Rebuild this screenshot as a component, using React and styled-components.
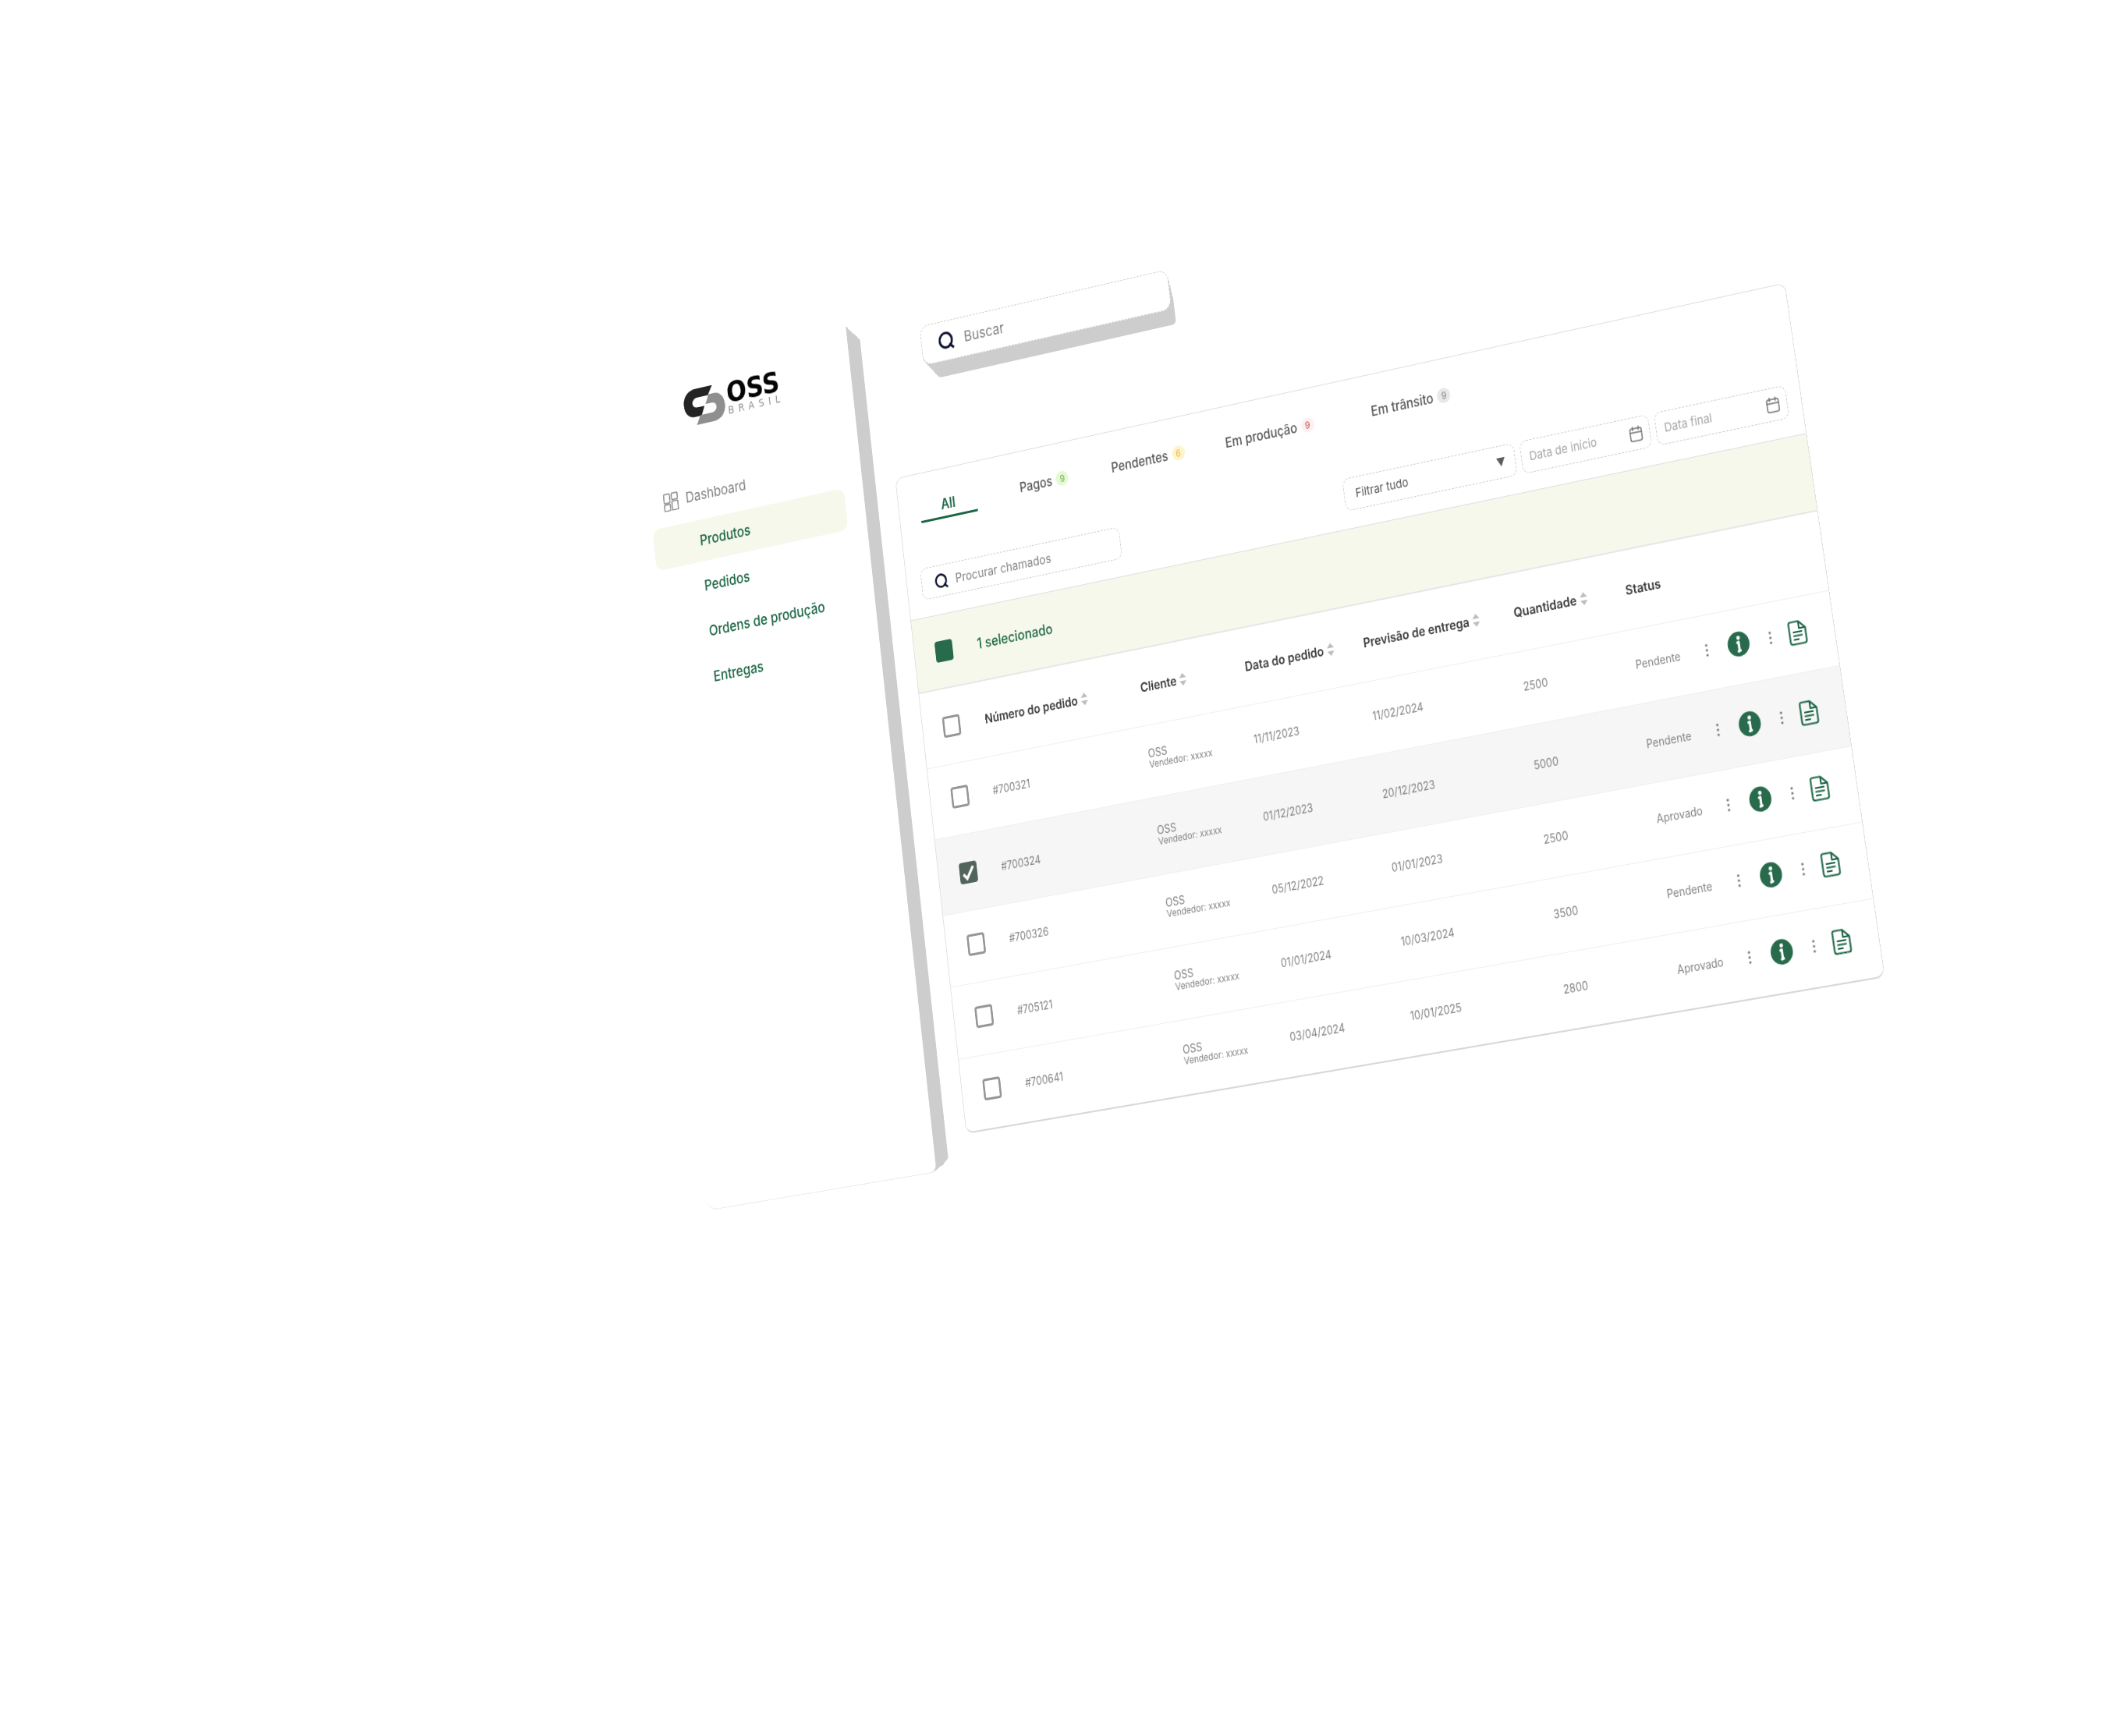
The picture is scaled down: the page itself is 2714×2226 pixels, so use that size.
import React from "react";
import styled, { createGlobalStyle, css } from "styled-components";

const color = {
  green: "#1c6645",
  fill: "#286b4c",
  tint: "#f6f8eb",
  edge: "#cdcdcd",
  line: "#dfdfdf",
  faint: "#f0f0f0",
  dash: "#cccccc",
  ink: "#3a3a3a",
  body: "#565656",
  muted: "#838383",
  soft: "#a6a6a6",
  navy: "#0d1030",
};

/* Stacks hard shadows so that a flat panel reads as a slab with depth. */
const extrude = ({ x, y, shrink, steps }) =>
  Array.from({ length: steps }, (_, i) => {
    const t = (i + 1) / steps;
    return `${Math.round(x * t)}px ${Math.round(y * t)}px 0 -${Math.round(shrink * t)}px ${color.edge}`;
  }).join(", ");

const GlobalStyle = createGlobalStyle`
  *, *::before, *::after { box-sizing: border-box; }
  html, body { margin: 0; background: #fff; }
  button, input, select { font: inherit; color: inherit; }
`;

const Page = styled.div`
  min-height: 100vh;
  overflow: hidden;
  background: #fff;
  color: ${color.muted};
  font-family: Inter, "Liberation Sans", sans-serif;
  font-size: 14px;
`;

const Scene = styled.div`
  display: flex;
  align-items: flex-start;
  gap: 51px;
  width: 1731px;
  transform-origin: 0 0;
  transform: matrix3d(
    0.75717, -0.207139, 0, -0.0000468633,
    0.0719488, 0.95554, 0, -0.00002939,
    0, 0, 1, 0,
    821, 497, 0, 1.0254621
  );
`;

const Sidebar = styled.aside`
  flex: 0 0 360px;
  min-height: 1094px;
  padding: 36px 30px 38px 21px;
  background: #fff;
  border-bottom: 1px solid #ececec;
  border-radius: 0 0 10px 18px;
  box-shadow: ${extrude({ x: 38, y: 3, shrink: 18, steps: 38 })};
`;

const Logo = styled.a`
  display: flex;
  align-items: flex-start;
  gap: 4px;
  height: 48px;
  margin: 0 0 65px 70px;
  text-decoration: none;
  font-family: "DejaVu Sans", Verdana, sans-serif;
`;

const LogoWords = styled.span`
  display: flex;
  flex-direction: column;
`;

const LogoName = styled.span`
  color: #050505;
  font-size: 38px;
  font-weight: 700;
  line-height: 30px;
`;

const LogoCountry = styled.span`
  color: #8f8f8f;
  font-size: 14px;
  line-height: 16px;
  letter-spacing: 7px;
`;

const NavList = styled.ul`
  display: flex;
  flex-direction: column;
  gap: 5px;
  margin: 0;
  padding: 0;
  list-style: none;
`;

const NavLink = styled.a`
  display: flex;
  align-items: center;
  gap: 12px;
  height: 55px;
  padding-left: ${(p) => (p.$nested ? 74 : 22)}px;
  border-radius: 12px;
  background: ${(p) => (p.$active ? color.tint : "transparent")};
  color: ${(p) => (p.$nested ? color.green : color.muted)};
  font-size: 19px;
  font-weight: ${(p) => (p.$nested ? 500 : 400)};
  text-decoration: none;
`;

const Main = styled.main`
  flex: 1;
  display: flex;
  flex-direction: column;
  gap: 137px;
  padding-top: 22px;
`;

const fieldText = css`
  flex: 1;
  min-width: 0;
  width: 100%;
  height: 100%;
  padding: 0;
  border: 0;
  outline: 0;
  background: transparent;
  &::placeholder {
    color: inherit;
    opacity: 1;
  }
`;

const Input = styled.input`
  ${fieldText}
`;

const Select = styled.select`
  ${fieldText}
  appearance: none;
`;

const Field = styled.label`
  display: flex;
  align-items: center;
  width: ${(p) => p.$width}px;
  height: 41px;
  padding: 0 9px 0 11px;
  border: 1px dashed ${color.dash};
  border-radius: 10px;
  background: #fff;
  color: ${color.soft};
  font-size: 15px;
`;

const SelectField = styled(Field)`
  padding: 0 14px 0 16px;
  color: ${color.body};
`;

const SearchField = styled(Field)`
  gap: 12px;
  padding: 0 20px;
  color: ${color.muted};
  font-size: 16px;
`;

const TopSearch = styled(SearchField)`
  gap: 16px;
  height: 52px;
  margin-left: 63px;
  padding: 0 26px;
  border-radius: 14px;
  font-size: 19px;
  box-shadow: ${extrude({ x: 12, y: 28, shrink: 8, steps: 28 })};
`;

const Card = styled.section`
  overflow: hidden;
  border: 1px solid ${color.line};
  border-bottom: 2px solid #d8d8d8;
  border-radius: 12px;
  background: #fff;
`;

const Tabs = styled.div`
  display: grid;
  grid-template-columns: 156px 141px 173px 217px auto;
  justify-content: start;
  padding: 30px 32px 0;
`;

const Tab = styled.button`
  display: flex;
  align-items: center;
  justify-content: ${(p) => (p.$active ? "center" : "flex-start")};
  gap: 6px;
  width: ${(p) => (p.$active ? "89px" : "auto")};
  height: 34px;
  padding: 0;
  border: 0;
  border-bottom: 3px solid ${(p) => (p.$active ? color.green : "transparent")};
  border-radius: 2px;
  background: transparent;
  color: ${(p) => (p.$active ? color.green : color.body)};
  font-size: ${(p) => (p.$active ? 18 : 17)}px;
  font-weight: ${(p) => (p.$active ? 600 : 500)};
  white-space: nowrap;
`;

const Badge = styled.span`
  display: grid;
  place-items: center;
  width: 19px;
  height: 19px;
  border-radius: 50%;
  background: ${(p) => p.$bg};
  color: ${(p) => p.$fg};
  font-size: 12px;
  font-weight: 400;
`;

const Filters = styled.div`
  display: flex;
  justify-content: space-between;
  padding: 58px 19px 22px 22px;
  border-bottom: 1px solid ${color.line};
`;

const FilterGroup = styled.div`
  display: flex;
  gap: 8px;
`;

const Selection = styled.label`
  display: flex;
  align-items: center;
  gap: 38px;
  height: 95px;
  padding-left: 32px;
  border-bottom: 2px solid #e7e7e7;
  background: ${color.tint};
  color: ${color.green};
  font-size: 18px;
  font-weight: 500;
`;

const Box = styled.input.attrs({ type: "checkbox" })`
  appearance: none;
  display: block;
  flex: none;
  width: 27px;
  height: 27px;
  margin: 0;
  border: 3px solid #969696;
  border-radius: 4px;
  background: #fff;
  &:checked {
    border-color: #52655c;
    background: #52655c;
  }
`;

const SolidBox = styled(Box)`
  &:checked {
    border-color: ${color.fill};
    background: ${color.fill};
  }
`;

const Tick = styled.span`
  display: grid;
  width: 27px;
  & > * {
    grid-area: 1 / 1;
  }
  & > svg {
    pointer-events: none;
    z-index: 1;
  }
`;

const Table = styled.table`
  width: 100%;
  table-layout: fixed;
  border-collapse: separate;
  border-spacing: 0;
  text-align: left;
`;

const Col = styled.col`
  width: ${(p) => (p.$width ? `${p.$width}px` : "auto")};
`;

const Th = styled.th`
  height: 97px;
  padding: 0;
  border-bottom: 1px solid ${color.faint};
  color: ${color.ink};
  font-size: 16px;
  font-weight: 600;
  white-space: nowrap;
`;

const SortButton = styled.button`
  display: flex;
  align-items: center;
  gap: 5px;
  padding: 0;
  border: 0;
  background: transparent;
`;

const Row = styled.tr`
  background: ${(p) => (p.$selected ? "#f6f6f6" : "#fff")};
  & > td {
    height: ${(p) => (p.$selected ? 97 : 91)}px;
    padding: 0 0 ${(p) => (p.$selected ? 0 : 6)}px;
    border-bottom: 1px solid ${color.faint};
    white-space: nowrap;
  }
  &:last-child > td {
    border-bottom: 0;
  }
`;

const CheckCell = styled.td`
  && {
    padding-left: 32px;
  }
`;

const CheckHead = styled(Th)`
  padding-left: 31px;
`;

const Client = styled.div`
  line-height: 14px;
`;

const Seller = styled.div`
  font-size: 12px;
  line-height: 14px;
`;

const Actions = styled.div`
  display: flex;
  align-items: center;
`;

const IconButton = styled.button`
  display: grid;
  place-items: center;
  width: ${(p) => p.$width}px;
  height: 32px;
  padding: 0;
  border: 0;
  background: transparent;
`;

const LogoMark = () => (
  <svg width="66" height="48" viewBox="0 0 66 48" aria-hidden="true">
    <path
      fill="#242424"
      d="M48 0H21C8 0 0 8 0 19s7 18 16 18h11l6-12H22c-5 0-8-3-8-6s3-7 8-7h18z"
    />
    <path
      fill="#8f8f8f"
      d="M18 48h27c13 0 21-8 21-19S59 11 50 11h-9l-6 12h9c5 0 8 2 8 6s-3 7-8 7H25z"
    />
  </svg>
);

const DashboardIcon = () => (
  <svg width="24" height="24" viewBox="0 0 24 24" fill="none" stroke="#838383" strokeWidth="1.6" aria-hidden="true">
    <rect x="1" y="1" width="9.5" height="12" rx="1" />
    <rect x="13.5" y="1" width="9.5" height="8.5" rx="1" />
    <rect x="1" y="15" width="9.5" height="8.5" rx="1" />
    <rect x="13.5" y="11.5" width="9.5" height="12" rx="1" />
  </svg>
);

const SearchIcon = ({ size }) => (
  <svg width={size} height={size} viewBox="0 0 24 24" fill="none" stroke={color.navy} strokeWidth="3.2" strokeLinecap="round" aria-hidden="true">
    <circle cx="11.5" cy="11.5" r="9.5" />
    <path d="M17.5 18 22 22" />
  </svg>
);

const ArrowIcon = () => (
  <svg width="12" height="11" viewBox="0 0 12 11" fill="#5c5c5c" aria-hidden="true">
    <path d="M0 0h12L6 11z" />
  </svg>
);

const CalendarIcon = () => (
  <svg width="20" height="20" viewBox="0 0 20 20" fill="none" stroke="#727272" strokeWidth="1.5" strokeLinecap="round" aria-hidden="true">
    <rect x="2" y="3" width="16" height="15.5" rx="2.5" />
    <path d="M2 8h16M6 1v4M14 1v4" />
  </svg>
);

const SortIcon = () => (
  <svg width="10" height="16" viewBox="0 0 10 16" fill="#bdbdbd" aria-hidden="true">
    <path d="M5 0l5 6H0zM0 10h10l-5 6z" />
  </svg>
);

const CheckIcon = () => (
  <svg width="27" height="27" viewBox="0 0 26 26" fill="none" stroke="#fff" strokeWidth="3.6" aria-hidden="true">
    <path d="M5.5 14.5 10.5 20 20.5 6" />
  </svg>
);

const DotsIcon = () => (
  <svg width="4" height="16" viewBox="0 0 4 16" fill="#7a7a7a" aria-hidden="true">
    <circle cx="2" cy="2" r="1.6" />
    <circle cx="2" cy="8" r="1.6" />
    <circle cx="2" cy="14" r="1.6" />
  </svg>
);

const InfoIcon = () => (
  <svg width="30" height="30" viewBox="0 0 30 30" aria-hidden="true">
    <circle cx="15" cy="15" r="15" fill={color.fill} />
    <circle cx="15.5" cy="7.5" r="2.4" fill="#fff" />
    <path
      fill="none"
      stroke="#fff"
      strokeWidth="3.2"
      strokeLinecap="round"
      strokeLinejoin="round"
      d="M13.6 13 15.3 12.6V22.6M14 23.6 16.6 23"
    />
  </svg>
);

const DocumentIcon = () => (
  <svg width="25" height="30" viewBox="0 0 25 30" fill="none" stroke={color.green} strokeWidth="2.2" strokeLinecap="round" strokeLinejoin="round" aria-hidden="true">
    <path d="M4 1.5H15L23.5 10V25.5Q23.5 28.5 20.5 28.5H4.5Q1.5 28.5 1.5 25.5V4Q1.5 1.5 4 1.5Z" />
    <path d="M15 2V10H23M7 14H18M7 18.5H18M7 23H13" />
  </svg>
);

const subItems = ["Produtos", "Pedidos", "Ordens de produção", "Entregas"];

const tabs = [
  { label: "Pagos", count: 9, bg: "#e2fbd2", fg: "#76a765" },
  { label: "Pendentes", count: 6, bg: "#fff4c9", fg: "#e3b566" },
  { label: "Em produção", count: 9, bg: "#fdf0ef", fg: "#cc4b5a" },
  { label: "Em trânsito", count: 9, bg: "#e8e8e8", fg: "#858585" },
];

const columns = ["Número do pedido", "Cliente", "Data do pedido", "Previsão de entrega", "Quantidade"];
const widths = [96, 238, 157, 175, 218, 159, 92, 0];

const orders = [
  { id: "#700321", date: "11/11/2023", due: "11/02/2024", qty: 2500, status: "Pendente" },
  { id: "#700324", date: "01/12/2023", due: "20/12/2023", qty: 5000, status: "Pendente", selected: true },
  { id: "#700326", date: "05/12/2022", due: "01/01/2023", qty: 2500, status: "Aprovado" },
  { id: "#705121", date: "01/01/2024", due: "10/03/2024", qty: 3500, status: "Pendente" },
  { id: "#700641", date: "03/04/2024", due: "10/01/2025", qty: 2800, status: "Aprovado" },
];

function OrderRow({ order }) {
  return (
    <Row $selected={order.selected}>
      <CheckCell>
        <Tick>
          <Box aria-label={`Selecionar ${order.id}`} defaultChecked={order.selected} />
          {order.selected && <CheckIcon />}
        </Tick>
      </CheckCell>
      <td>{order.id}</td>
      <td>
        <Client>OSS</Client>
        <Seller>Vendedor: xxxxx</Seller>
      </td>
      <td>{order.date}</td>
      <td>{order.due}</td>
      <td>{order.qty}</td>
      <td>{order.status}</td>
      <td>
        <Actions>
          <IconButton $width={16} aria-label="Mais opções"><DotsIcon /></IconButton>
          <IconButton $width={72} aria-label="Informações"><InfoIcon /></IconButton>
          <IconButton $width={16} aria-label="Mais opções"><DotsIcon /></IconButton>
          <IconButton $width={58} aria-label="Documento"><DocumentIcon /></IconButton>
        </Actions>
      </td>
    </Row>
  );
}

export default function App() {
  return (
    <Page>
      <GlobalStyle />
      <Scene>
        <Sidebar>
          <Logo href="#">
            <LogoMark />
            <LogoWords>
              <LogoName>OSS</LogoName>
              <LogoCountry>BRASIL</LogoCountry>
            </LogoWords>
          </Logo>
          <nav>
            <NavList>
              <li>
                <NavLink href="#"><DashboardIcon />Dashboard</NavLink>
              </li>
              {subItems.map((item, i) => (
                <li key={item}>
                  <NavLink href="#" $nested $active={i === 0}>{item}</NavLink>
                </li>
              ))}
            </NavList>
          </nav>
        </Sidebar>

        <Main>
          <TopSearch $width={385}>
            <SearchIcon size={24} />
            <Input type="search" placeholder="Buscar" aria-label="Buscar" />
          </TopSearch>

          <Card>
            <Tabs>
              <Tab $active>All</Tab>
              {tabs.map((tab) => (
                <Tab key={tab.label}>
                  {tab.label}
                  <Badge $bg={tab.bg} $fg={tab.fg}>{tab.count}</Badge>
                </Tab>
              ))}
            </Tabs>

            <Filters>
              <SearchField $width={308}>
                <SearchIcon size={20} />
                <Input type="search" placeholder="Procurar chamados" aria-label="Procurar chamados" />
              </SearchField>
              <FilterGroup>
                <SelectField $width={250}>
                  <Select aria-label="Filtro" defaultValue="all">
                    <option value="all">Filtrar tudo</option>
                  </Select>
                  <ArrowIcon />
                </SelectField>
                <Field $width={184}>
                  <Input placeholder="Data de início" aria-label="Data de início" />
                  <CalendarIcon />
                </Field>
                <Field $width={184}>
                  <Input placeholder="Data final" aria-label="Data final" />
                  <CalendarIcon />
                </Field>
              </FilterGroup>
            </Filters>

            <Selection>
              <SolidBox defaultChecked />
              1 selecionado
            </Selection>

            <Table>
              <colgroup>
                {widths.map((w, i) => <Col key={i} $width={w} />)}
              </colgroup>
              <thead>
                <tr>
                  <CheckHead><Box aria-label="Selecionar todos" /></CheckHead>
                  {columns.map((name) => (
                    <Th key={name}>
                      <SortButton>{name}<SortIcon /></SortButton>
                    </Th>
                  ))}
                  <Th>Status</Th>
                  <Th />
                </tr>
              </thead>
              <tbody>
                {orders.map((order) => <OrderRow key={order.id} order={order} />)}
              </tbody>
            </Table>
          </Card>
        </Main>
      </Scene>
    </Page>
  );
}
